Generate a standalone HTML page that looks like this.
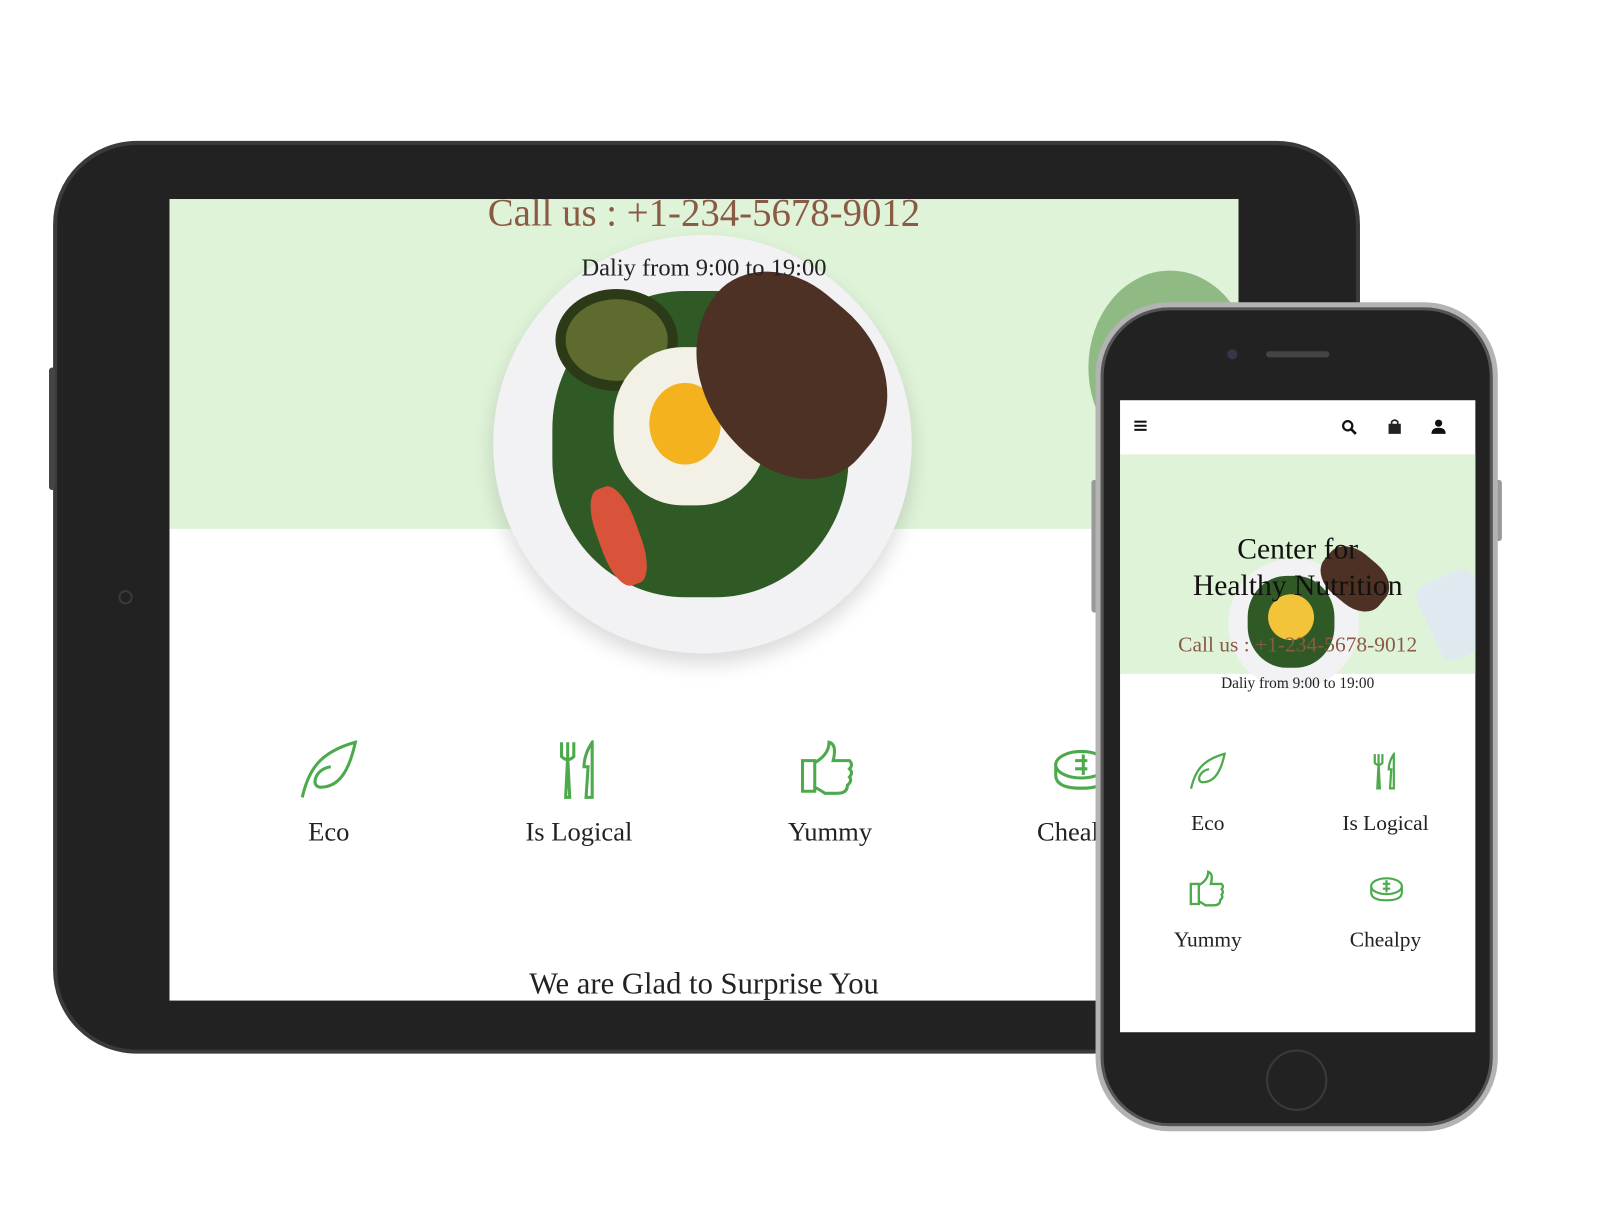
<!DOCTYPE html>
<html><head><style>
*{margin:0;padding:0;box-sizing:border-box}
body{width:1600px;height:1200px;background:#fff;position:relative;overflow:hidden;font-family:"Liberation Serif",serif}
#w{position:absolute;left:0;top:0;width:1600px;height:1200px;transform:scale(1.021);transform-origin:0 0}
.a{position:absolute}
.t{color:#222;text-align:center}
</style></head><body><div id="w">
<!-- tablet -->
<div class="a" style="left:52px;top:138px;width:1280px;height:894px;border-radius:82px;background:#222;border:4px solid #3a3a3a"></div>
<div class="a" style="left:48px;top:360px;width:6px;height:120px;background:#444;border-radius:3px"></div>
<div class="a" style="left:116px;top:578px;width:14px;height:14px;border-radius:50%;border:2px solid #3a3a3a"></div>
<div class="a" style="left:166px;top:195px;width:1047px;height:785px;background:#fff;overflow:hidden">
 <div class="a" style="left:0;top:0;width:1047px;height:323px;background:#dff3d9"></div>
 <div class="a" style="left:317px;top:35px;width:410px;height:410px;border-radius:50%;background:#f2f2f4;box-shadow:0 10px 20px rgba(0,0,0,.15)"></div>
 <div class="a" style="left:375px;top:90px;width:290px;height:300px;border-radius:45%;background:#2f5a25"></div>
 <div class="a" style="left:378px;top:88px;width:120px;height:100px;border-radius:50%;background:#5d6b2e;border:10px solid #2c3a18"></div>
 <div class="a" style="left:435px;top:145px;width:150px;height:155px;border-radius:45%;background:#f3f0e6"></div>
 <div class="a" style="left:470px;top:180px;width:70px;height:80px;border-radius:50%;background:#f3b21e"></div>
 <div class="a" style="left:580px;top:40px;width:210px;height:170px;border-radius:40% 50% 40% 60%;background:#4e3125;transform:rotate(40deg);transform-origin:left top"></div>
 <div class="a" style="left:420px;top:280px;width:40px;height:100px;border-radius:40%;background:#d9523a;transform:rotate(-20deg)"></div>
 <div class="a" style="left:900px;top:70px;width:160px;height:190px;border-radius:50%;background:#4f8a3e;opacity:.55"></div>
 <div class="a t" style="left:0;top:-8px;width:1047px;font-size:38px;color:#8b5a44">Call us : +1-234-5678-9012</div>
 <div class="a t" style="left:0;top:55px;width:1047px;font-size:24px">Daliy from 9:00 to 19:00</div>
 <svg class="a" style="left:126px;top:530px" width="60" height="60" viewBox="0 0 60 60" fill="none" stroke="#4caa4c" stroke-width="3"><path d="M4 56C10 30 20 12 56 2 50 30 40 46 22 46 12 46 16 28 32 26"/></svg>
 <div class="a t" style="left:76px;top:605px;width:160px;font-size:26px">Eco</div>
 <svg class="a" style="left:380px;top:530px" width="45" height="60" viewBox="0 0 45 60" fill="none" stroke="#4caa4c" stroke-width="3"><path d="M4 2v14q6 6 12 0V2M10 2v16M10 16l-2 40h4l-2-40M34 2q-8 12-8 24h4l-2 30h6l0-30z"/></svg>
 <div class="a t" style="left:321px;top:605px;width:160px;font-size:26px">Is Logical</div>
 <svg class="a" style="left:618px;top:530px" width="58" height="56" viewBox="0 0 58 56" fill="none" stroke="#4caa4c" stroke-width="3"><path d="M2 20h12v30H2zM14 22q14-8 14-20 8 2 4 18h16q4 4 0 8 4 4 0 8 3 4-2 8 0 8-10 8H24q-6-4-10-6"/></svg>
 <div class="a t" style="left:567px;top:605px;width:160px;font-size:26px">Yummy</div>
 <svg class="a" style="left:865px;top:538px" width="60" height="42" viewBox="0 0 60 42" fill="none" stroke="#4caa4c" stroke-width="3"><ellipse cx="28" cy="16" rx="25" ry="13"/><path d="M3 16v10q0 13 25 13 25 0 25-13V16M22 12h12M30 6v20M34 20H22"/></svg>
 <div class="a t" style="left:813px;top:605px;width:160px;font-size:26px">Chealpy</div>
 <div class="a t" style="left:0;top:752px;width:1047px;font-size:30px">We are Glad to Surprise You</div>
</div>
<!-- phone -->
<div class="a" style="left:1069px;top:470px;width:6px;height:130px;background:#999;border-radius:3px"></div>
<div class="a" style="left:1465px;top:470px;width:6px;height:60px;background:#999;border-radius:3px"></div>
<div class="a" style="left:1073px;top:296px;width:394px;height:812px;border-radius:72px;background:#222;border:5px solid #b3b3b3;box-shadow:inset 0 0 0 3px #555"></div>
<div class="a" style="left:1202px;top:342px;width:10px;height:10px;border-radius:50%;background:#3a3448"></div>
<div class="a" style="left:1240px;top:344px;width:62px;height:6px;border-radius:3px;background:#444"></div>
<div class="a" style="left:1240px;top:1028px;width:60px;height:60px;border-radius:50%;border:2px solid #3a3a3a"></div>
<div class="a" style="left:1097px;top:392px;width:348px;height:619px;background:#fff;overflow:hidden">
 <div class="a" style="left:0;top:53px;width:348px;height:215px;background:#dff3d9"></div>
 <div class="a" style="left:14px;top:20px;width:12px;height:2px;background:#111;box-shadow:0 4px 0 #111,0 8px 0 #111"></div>
 <svg class="a" style="left:217px;top:19px" width="16" height="16" viewBox="0 0 16 16"><circle cx="6" cy="6" r="4.5" fill="none" stroke="#111" stroke-width="2.2"/><path d="M9 9l5 5" stroke="#111" stroke-width="2.6"/></svg>
 <svg class="a" style="left:262px;top:18px" width="14" height="16" viewBox="0 0 14 16"><path d="M1 5h12v10H1z" fill="#222"/><path d="M4 6V3q3-3 6 0v3" stroke="#222" stroke-width="1.6" fill="none"/></svg>
 <svg class="a" style="left:305px;top:18px" width="14" height="16" viewBox="0 0 14 16"><circle cx="7" cy="4.5" r="3.5" fill="#111"/><path d="M0 15q0-6 7-6t7 6z" fill="#111"/></svg>
 <div class="a" style="left:106px;top:155px;width:128px;height:128px;border-radius:50%;background:#f2f2f4"></div>
 <div class="a" style="left:125px;top:172px;width:85px;height:90px;border-radius:45%;background:#2f5a25"></div>
 <div class="a" style="left:145px;top:190px;width:45px;height:45px;border-radius:50%;background:#f3c33a"></div>
 <div class="a" style="left:195px;top:150px;width:70px;height:50px;border-radius:40%;background:#4e3125;transform:rotate(40deg)"></div>
 <div class="a" style="left:300px;top:170px;width:60px;height:80px;border-radius:12px;background:#dfeaf0;transform:rotate(-25deg)"></div>
 <div class="a t" style="left:0;top:128px;width:348px;font-size:29px;line-height:36px;color:#111">Center for<br>Healthy Nutrition</div>
 <div class="a t" style="left:0;top:227px;width:348px;font-size:21px;color:#8b5a44">Call us : +1-234-5678-9012</div>
 <div class="a t" style="left:0;top:270px;width:348px;font-size:15px">Daliy from 9:00 to 19:00</div>
 <svg class="a" style="left:67px;top:345px" width="38" height="38" viewBox="0 0 60 60" fill="none" stroke="#4caa4c" stroke-width="3.5"><path d="M4 56C10 30 20 12 56 2 50 30 40 46 22 46 12 46 16 28 32 26"/></svg>
 <div class="a t" style="left:6px;top:402px;width:160px;font-size:21px">Eco</div>
 <svg class="a" style="left:247px;top:345px" width="28" height="38" viewBox="0 0 45 60" fill="none" stroke="#4caa4c" stroke-width="3.5"><path d="M4 2v14q6 6 12 0V2M10 2v16M10 16l-2 40h4l-2-40M34 2q-8 12-8 24h4l-2 30h6l0-30z"/></svg>
 <div class="a t" style="left:180px;top:402px;width:160px;font-size:21px">Is Logical</div>
 <svg class="a" style="left:68px;top:460px" width="38" height="38" viewBox="0 0 58 56" fill="none" stroke="#4caa4c" stroke-width="3.5"><path d="M2 20h12v30H2zM14 22q14-8 14-20 8 2 4 18h16q4 4 0 8 4 4 0 8 3 4-2 8 0 8-10 8H24q-6-4-10-6"/></svg>
 <div class="a t" style="left:6px;top:516px;width:160px;font-size:21px">Yummy</div>
 <svg class="a" style="left:243px;top:466px" width="36" height="26" viewBox="0 0 60 42" fill="none" stroke="#4caa4c" stroke-width="3.5"><ellipse cx="30" cy="16" rx="25" ry="13"/><path d="M5 16v10q0 13 25 13 25 0 25-13V16M24 12h12M30 6v20M36 20H24"/></svg>
 <div class="a t" style="left:180px;top:516px;width:160px;font-size:21px">Chealpy</div>
</div>
</div></body></html>
